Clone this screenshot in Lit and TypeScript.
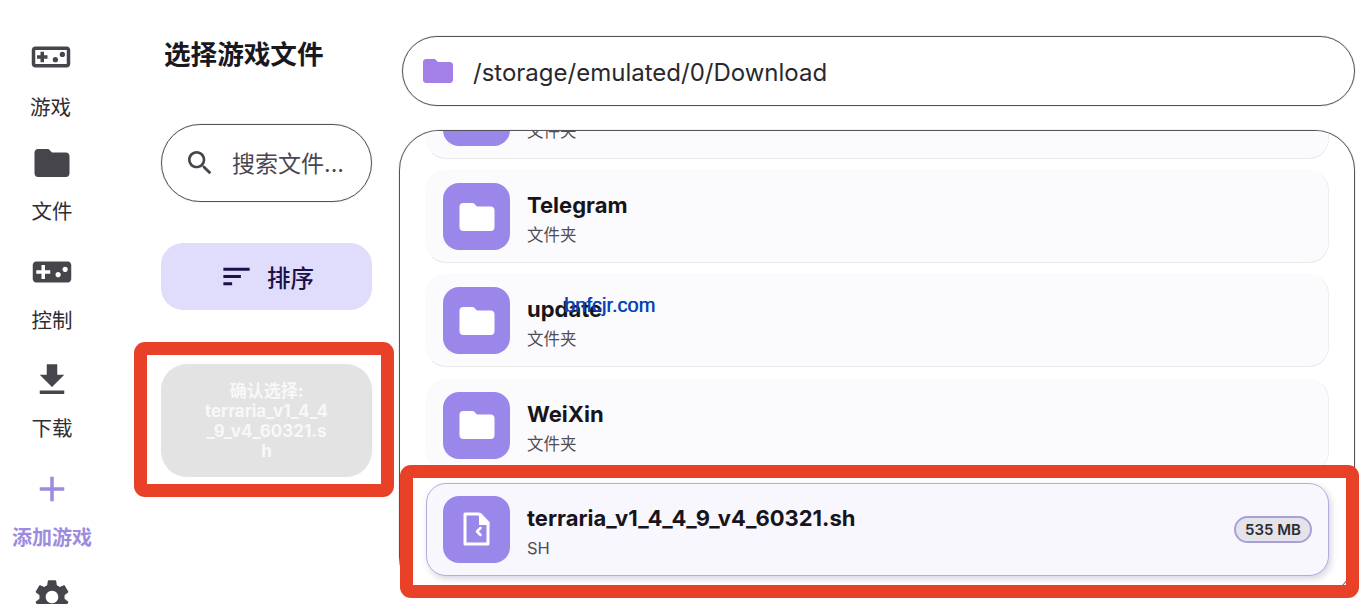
import { LitElement, html, css, svg } from 'lit';
import { customElement, state } from 'lit/decorators.js';

const PAD = 'M21 6H3c-1.1 0-2 .9-2 2v8c0 1.1.9 2 2 2h18c1.1 0 2-.9 2-2V8c0-1.1-.9-2-2-2zm-10 7H8v3H6v-3H3v-2h3V8h2v3h3v2zm4.5 2c-.83 0-1.5-.67-1.5-1.5s.67-1.5 1.5-1.5 1.5.67 1.5 1.5-.67 1.5-1.5 1.5zm4-3c-.83 0-1.5-.67-1.5-1.5S18.67 9 19.5 9s1.5.67 1.5 1.5-.67 1.5-1.5 1.5z';
const PAD_OUTLINE = 'M21 6H3c-1.1 0-2 .9-2 2v8c0 1.1.9 2 2 2h18c1.1 0 2-.9 2-2V8c0-1.1-.9-2-2-2zm0 10H3V8h18v8zM6 15h2v-2h2v-2H8V9H6v2H4v2h2zM14.5 15a1.5 1.5 0 1 0 0-3 1.5 1.5 0 0 0 0 3zM18.5 12a1.5 1.5 0 1 0 0-3 1.5 1.5 0 0 0 0 3z';
const FOLDER = 'M10 4H4c-1.1 0-2 .9-2 2v12c0 1.1.9 2 2 2h16c1.1 0 2-.9 2-2V8c0-1.1-.9-2-2-2h-8l-2-2z';
const DOWNLOAD = 'M19 9h-4V3H9v6H5l7 7 7-7zM5 18v2h14v-2H5z';
const PLUS = 'M19 13h-6v6h-2v-6H5v-2h6V5h2v6h6v2z';
const GEAR = 'M19.14 12.94c.04-.3.06-.61.06-.94 0-.32-.02-.64-.07-.94l2.03-1.58c.18-.14.23-.41.12-.61l-1.92-3.32c-.12-.22-.37-.29-.59-.22l-2.39.96c-.5-.38-1.03-.7-1.62-.94l-.36-2.54c-.04-.24-.24-.41-.48-.41h-3.84c-.24 0-.43.17-.47.41l-.36 2.54c-.59.24-1.13.57-1.62.94l-2.39-.96c-.22-.08-.47 0-.59.22L2.74 8.87c-.12.21-.08.47.12.61l2.03 1.58c-.05.3-.09.63-.09.94s.02.64.07.94l-2.03 1.58c-.18.14-.23.41-.12.61l1.92 3.32c.12.22.37.29.59.22l2.39-.96c.5.38 1.03.7 1.62.94l.36 2.54c.05.24.24.41.48.41h3.84c.24 0 .44-.17.47-.41l.36-2.54c.59-.24 1.13-.56 1.62-.94l2.39.96c.22.08.47 0 .59-.22l1.92-3.32c.12-.22.07-.47-.12-.61l-2.01-1.58zM12 15.6c-1.98 0-3.6-1.62-3.6-3.6s1.62-3.6 3.6-3.6 3.6 1.62 3.6 3.6-1.62 3.6-3.6 3.6z';
const SEARCH = 'M15.5 14h-.79l-.28-.27C15.41 12.59 16 11.11 16 9.5 16 5.91 13.09 3 9.5 3S3 5.91 3 9.5 5.91 16 9.5 16c1.61 0 3.09-.59 4.23-1.57l.27.28v.79l5 4.99L20.49 19l-4.99-5zm-6 0C7.01 14 5 11.99 5 9.5S7.01 5 9.5 5 14 7.01 14 9.5 11.99 14 9.5 14z';
const SORT = 'M3 18h6v-2H3v2zM3 6v2h18V6H3zm0 7h12v-2H3v2z';

const icon = (d: string, size: number) => html`
  <svg width=${size} height=${size} viewBox="0 0 24 24" fill="currentColor">${svg`<path d=${d} fill-rule="evenodd"></path>`}</svg>
`;

@customElement('app-root')
export class AppRoot extends LitElement {
  @state() private nav = [
    { label: '游戏', d: PAD_OUTLINE },
    { label: '文件', d: FOLDER },
    { label: '控制', d: PAD },
    { label: '下载', d: DOWNLOAD },
    { label: '添加游戏', d: PLUS, active: true },
    { label: '设置', d: GEAR },
  ];
  @state() private files = [
    { name: 'Tencent', type: '文件夹' },
    { name: 'Telegram', type: '文件夹' },
    { name: 'update', type: '文件夹' },
    { name: 'WeiXin', type: '文件夹' },
    { name: 'terraria_v1_4_4_9_v4_60321.sh', type: 'SH', size: '535 MB', selected: true },
  ];

  static styles = css`
    :host {
      display: block;
      position: relative;
      height: 604px;
      overflow: hidden;
      background: #fff;
      font-family: Inter, 'Noto Sans CJK SC', sans-serif;
      color: #1a181f;
    }
    .layout {
      display: flex;
      height: 604px;
    }
    .nav {
      width: 104px;
      flex: none;
      display: flex;
      flex-direction: column;
      align-items: center;
      gap: 24.5px;
      padding-top: 36px;
    }
    .nav-item {
      display: flex;
      flex-direction: column;
      align-items: center;
      gap: 14px;
      color: #47454c;
    }
    .nav-item:first-child {
      gap: 16px;
      margin: 0 3px -4.5px 0;
    }
    .nav-item svg {
      display: block;
    }
    .nav-label {
      font-size: 20.5px;
      line-height: 28px;
      color: #2f2d33;
      white-space: nowrap;
    }
    .nav-item.active,
    .nav-item.active .nav-label {
      color: #9d8bdf;
    }
    .nav-item.active .nav-label {
      font-size: 20px;
      font-weight: 700;
    }
    .side {
      width: 211px;
      flex: none;
      margin-left: 57px;
      padding-top: 36px;
      display: flex;
      flex-direction: column;
    }
    h1 {
      margin: 0 0 0 3px;
      font-size: 26.6px;
      line-height: 36px;
      font-weight: 700;
      white-space: nowrap;
    }
    .search {
      box-sizing: border-box;
      height: 78px;
      margin-top: 52px;
      display: flex;
      align-items: center;
      gap: 16px;
      padding-left: 22px;
      border: 1px solid #56525a;
      box-shadow: 0 0 1px rgba(40, 36, 44, 0.55);
      border-radius: 39px;
      font-size: 23px;
      color: #49464e;
      white-space: nowrap;
    }
    .search svg {
      color: #47444c;
      flex: none;
    }
    .search span {
      margin-bottom: 2px;
    }
    .sort {
      height: 67px;
      margin-top: 41px;
      display: flex;
      align-items: center;
      justify-content: center;
      gap: 13px;
      border-radius: 22px;
      background: #e0dcfc;
      color: #1c1148;
      font-size: 23.5px;
      font-weight: 500;
    }
    .confirm {
      box-sizing: border-box;
      height: 113px;
      margin-top: 54px;
      padding: 0 41px;
      display: flex;
      flex-direction: column;
      justify-content: center;
      text-align: center;
      word-break: break-all;
      border-radius: 26px;
      background: #e3e3e3;
      color: #f8f8f8;
      font-size: 17px;
      line-height: 20px;
      font-weight: 700;
    }
    .main {
      width: 956px;
      flex: none;
      margin-left: 27px;
      padding-top: 36px;
      display: flex;
      flex-direction: column;
    }
    .path {
      box-sizing: border-box;
      height: 70px;
      margin-left: 3px;
      display: flex;
      align-items: center;
      gap: 17px;
      padding-left: 17px;
      border: 1px solid #56525a;
      box-shadow: 0 0 1px rgba(40, 36, 44, 0.55);
      border-radius: 35px;
      font-size: 24px;
      color: #2a282e;
    }
    .path svg {
      color: #a280e8;
      flex: none;
    }
    .path span {
      margin-top: 2px;
    }
    .panel {
      box-sizing: border-box;
      height: 467px;
      margin-top: 24px;
      padding: 0 25px 0 26px;
      border: 1px solid #56525a;
      box-shadow: 0 0 1px rgba(40, 36, 44, 0.55);
      border-radius: 40px;
      overflow: hidden;
    }
    .list {
      margin-top: -65.33px;
      display: flex;
      flex-direction: column;
      gap: 11.33px;
    }
    .row {
      box-sizing: border-box;
      height: 93px;
      flex: none;
      display: flex;
      align-items: center;
      gap: 17px;
      padding: 0 16px;
      border: 1px solid #fafafc;
      border-bottom-color: #e9e9ed;
      border-right-color: #eeeef2;
      border-radius: 20px;
      background: #fbfbfe;
    }
    .row.selected {
      border: 1px solid #b5abdc;
      background: #f8f7fe;
      box-shadow: 2px 3px 6px rgba(70, 60, 120, 0.22);
    }
    .tile {
      width: 67px;
      height: 67px;
      flex: none;
      display: flex;
      align-items: center;
      justify-content: center;
      border-radius: 16px;
      background: #9b87e9;
      color: #fff;
    }
    .info {
      flex: 1;
      min-width: 0;
      padding-top: 4px;
    }
    .name {
      font-size: 22px;
      line-height: 30px;
      font-weight: 700;
      color: #17151b;
    }
    .type {
      margin-top: 3px;
      font-size: 16.5px;
      line-height: 24px;
      color: #504d55;
    }
    .size {
      box-sizing: border-box;
      height: 27px;
      padding: 0 9px;
      display: flex;
      align-items: center;
      border: 2px solid #a9a0d8;
      border-radius: 14px;
      background: #e4e3ea;
      font-size: 15px;
      font-weight: 600;
      color: #2f2d33;
    }
    /* red annotation frames and the watermark sit on top of the screenshot */
    .mark {
      position: absolute;
      box-sizing: border-box;
      border: 13px solid #e84127;
      border-radius: 11px;
      pointer-events: none;
    }
    .mark-side {
      left: 134px;
      top: 342px;
      width: 260px;
      height: 155px;
    }
    .mark-file {
      left: 400px;
      top: 465px;
      width: 959px;
      height: 133px;
    }
    .watermark {
      position: absolute;
      left: 564px;
      top: 294px;
      font-family: 'Liberation Sans', sans-serif;
      font-size: 20px;
      line-height: 22px;
      color: #0b43b4;
      text-shadow: 0.5px 0 0 #0b43b4;
    }
  `;

  private _fileIcon() {
    return html`
      <svg width="42" height="42" viewBox="0 0 42 42" fill="none">
        ${svg`
          <path d="M9 6h14l9 9.5V36H9z" stroke="#fff" stroke-width="3" stroke-linejoin="round"></path>
          <path d="M23 5h2l8.500 9v3H23z" fill="#fff"></path>
          <path d="M24.500 20l-3.500 3.500 3.500 3.500" stroke="#fff" stroke-width="2.500" stroke-linecap="round" stroke-linejoin="round"></path>
        `}
      </svg>
    `;
  }

  render() {
    return html`
      <div class="layout">
        <nav class="nav">
          ${this.nav.map(item => html`
            <div class="nav-item ${item.active ? 'active' : ''}">
              ${icon(item.d, 42)}
              <span class="nav-label">${item.label}</span>
            </div>
          `)}
        </nav>

        <section class="side">
          <h1>选择游戏文件</h1>
          <div class="search">${icon(SEARCH, 32)}<span>搜索文件...</span></div>
          <div class="sort">${icon(SORT, 35)}<span>排序</span></div>
          <div class="confirm">
            <div>确认选择:</div>
            <div>terraria_v1_4_4_9_v4_60321.sh</div>
          </div>
        </section>

        <section class="main">
          <div class="path">${icon(FOLDER, 36)}<span>/storage/emulated/0/Download</span></div>
          <div class="panel">
            <div class="list">
              ${this.files.map(file => html`
                <div class="row ${file.selected ? 'selected' : ''}">
                  <div class="tile">${file.selected ? this._fileIcon() : icon(FOLDER, 42)}</div>
                  <div class="info">
                    <div class="name">${file.name}</div>
                    <div class="type">${file.type}</div>
                  </div>
                  ${file.size ? html`<div class="size">${file.size}</div>` : ''}
                </div>
              `)}
            </div>
          </div>
        </section>
      </div>

      <div class="mark mark-side"></div>
      <div class="mark mark-file"></div>
      <div class="watermark">bnfcjr.com</div>
    `;
  }
}

declare global {
  interface HTMLElementTagNameMap {
    'app-root': AppRoot;
  }
}
